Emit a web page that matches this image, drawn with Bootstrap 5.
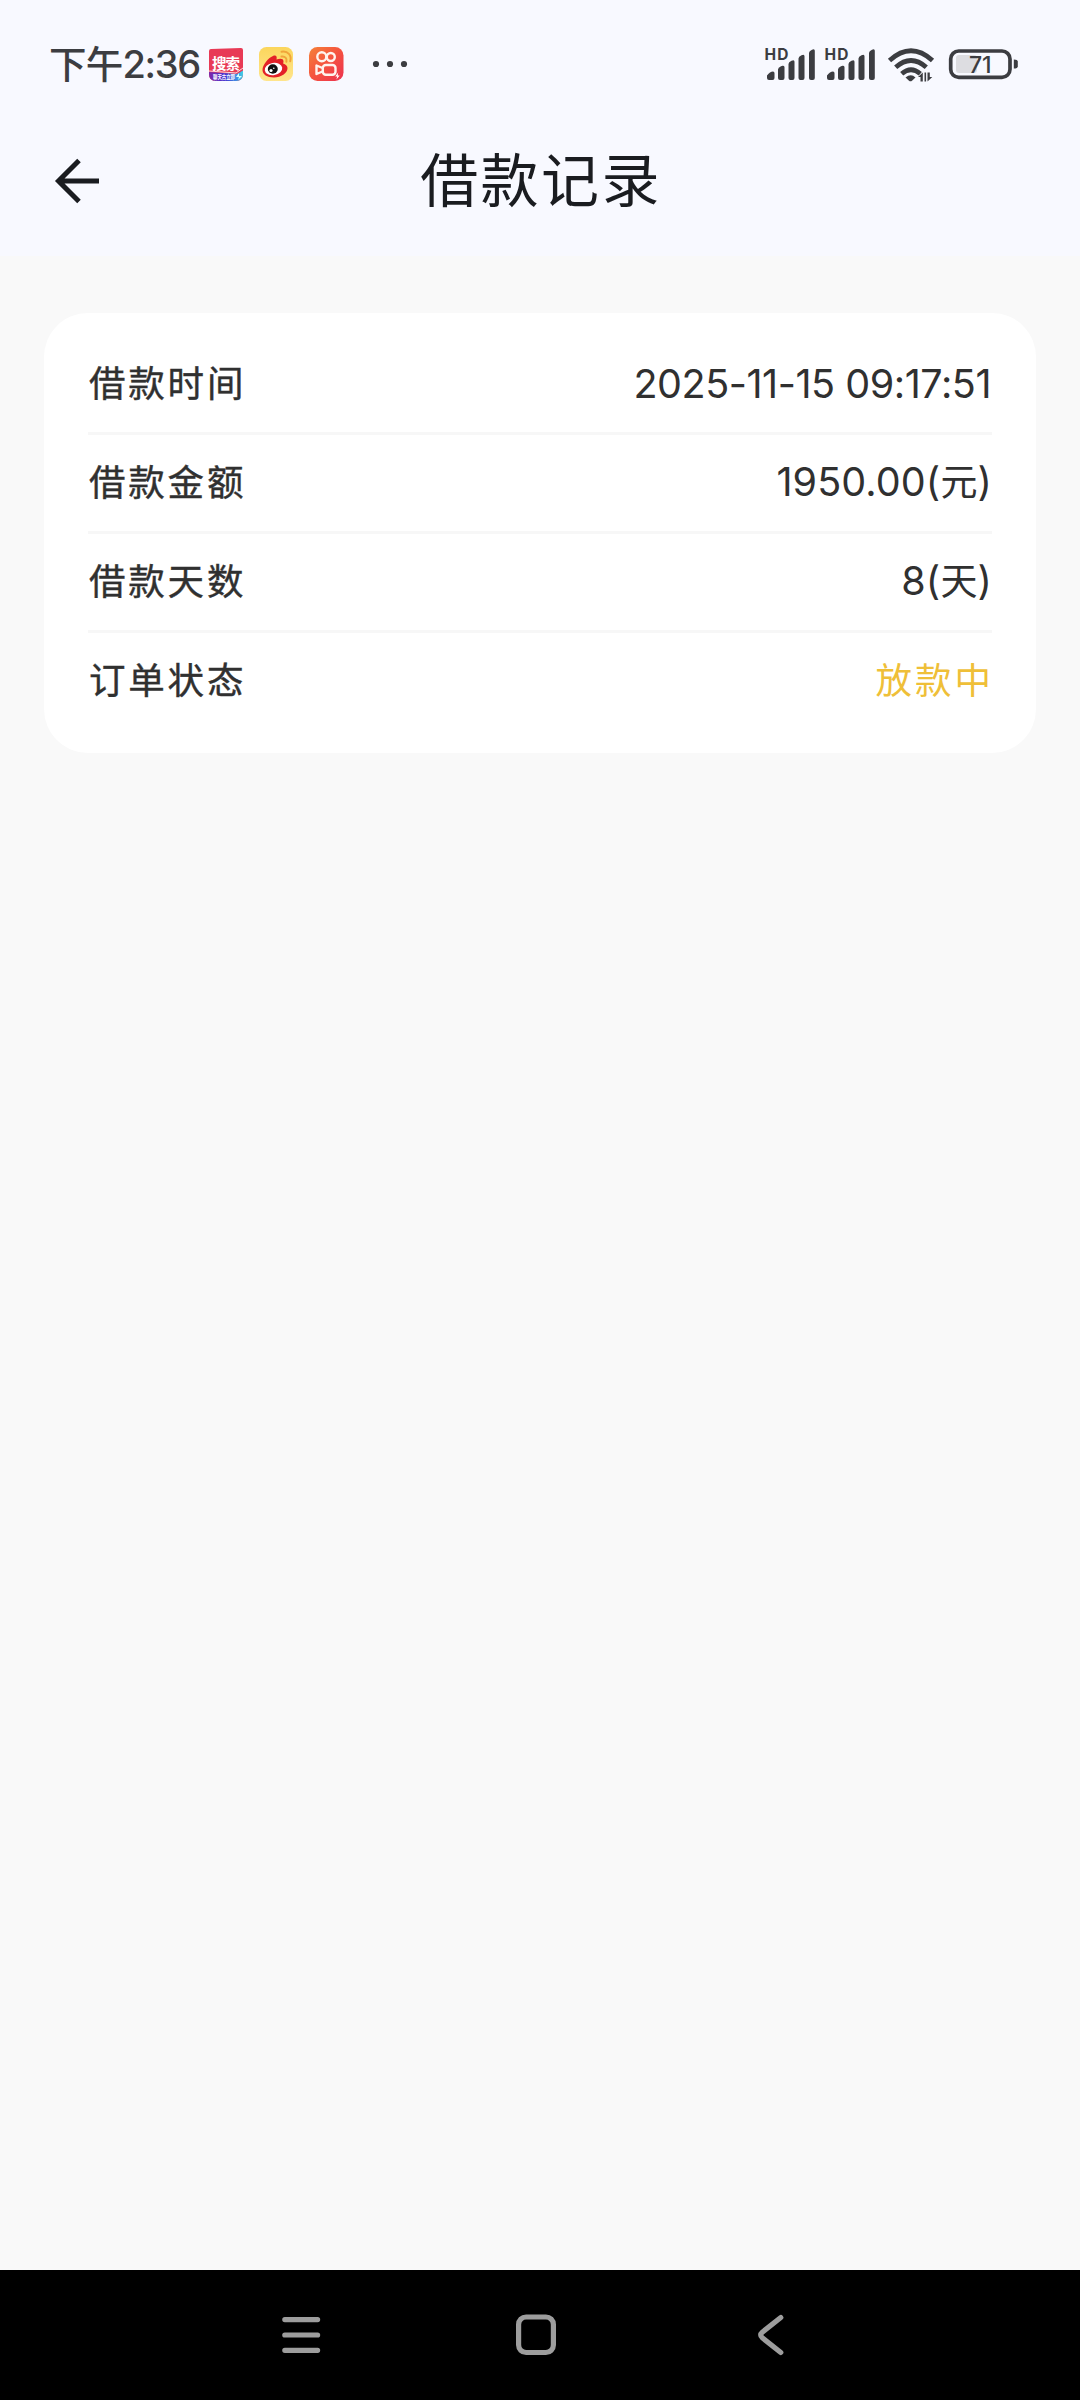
<!DOCTYPE html>
<html lang="zh-CN">
<head>
<meta charset="utf-8">
<meta name="viewport" content="width=device-width, initial-scale=1">
<title>借款记录</title>
<link href="https://cdn.jsdelivr.net/npm/bootstrap@5.3.0/dist/css/bootstrap.min.css" rel="stylesheet">
<style>
  body { background: #f9f9f9; color: #303030; font-family: Inter, "Noto Sans CJK SC", sans-serif; }
  .screen { height: 2400px; width: 1080px; }
  .top-area { background: #f8f9ff; height: 256px; }
  .status-bar { height: 106px; padding: 22px 62px 0 49px; color: #3c3d41; }
  .clock-text { font-size: 38px; line-height: 42px; font-weight: 500; width: 159px; letter-spacing: -1.3px; padding-top: 1px; }
  .clock-text .zh { font-size: 37.5px; letter-spacing: -.8px; }
  .title-bar { height: 150px; display: grid; grid-template-columns: 54px 1fr 54px; padding: 0 50px; color: #1a1c20; }
  .title-bar h1 { font-size: 58px; line-height: 84px; letter-spacing: 2.4px; font-weight: 400; padding: 33px 0 0 2px; }
  .back-btn { padding-top: 47px; line-height: 0; }
  .loan-card { margin: 57px 44px 0; height: 440px; border: 0; border-radius: 44px; padding: 23px 44px 0; background: #fff; }
  .loan-row { height: 99px; border-bottom: 3px solid #f7f7f7; line-height: 60px; background: none; color: inherit; padding: 0 0 1px; }
  .loan-row:last-child { border-color: transparent; }
  .row-label { font-size: 36.5px; letter-spacing: 2.8px; font-weight: 400; -webkit-text-stroke: .4px; padding-left: 1px; }
  .row-value { font-size: 39.5px; letter-spacing: .1px; }
  .row-value.v-time { letter-spacing: -.45px; padding-right: 1px; }
  .row-value .zh { font-size: 37px; }
  .row-status { color: #efbf38; font-size: 36.5px; letter-spacing: 3px; margin-right: -2px; }
  .nav-keys { background: #000; height: 130px; padding-right: 10px; }
</style>
</head>
<body>
<div class="screen d-flex flex-column">
  <header class="top-area">
    <div class="status-bar d-flex align-items-center justify-content-between">
      <div class="d-flex align-items-center">
        <span class="clock-text text-nowrap"><span class="zh">下午</span>2:36</span>
        <svg width="206" height="40" viewBox="208 44 206 40">
          <defs>
            <linearGradient id="kw" x1="0" y1="0" x2="1" y2="1"><stop offset="0" stop-color="#f58239"/><stop offset=".5" stop-color="#f5523f"/><stop offset="1" stop-color="#ec3150"/></linearGradient>
            <linearGradient id="tb" x1="0" x2="1"><stop offset="0" stop-color="#8128a8"/><stop offset=".45" stop-color="#4930cf"/><stop offset=".8" stop-color="#3b93e6"/><stop offset="1" stop-color="#45dbe6"/></linearGradient>
            <linearGradient id="wb" x1="0" y1="0" x2="0" y2="1"><stop offset="0" stop-color="#fbd65c"/><stop offset="1" stop-color="#ffe58d"/></linearGradient>
            <clipPath id="tile"><path d="M209 51q0-2 2-2l30-1q2 0 2 2v24q0 7-7 7h-20q-7 0-7-7z"/></clipPath>
          </defs>
          <g clip-path="url(#tile)">
            <rect x="208" y="46" width="36" height="36" fill="#e83a56"/>
            <path d="M208 72l29 2 7-4v12h-36z" fill="url(#tb)"/>
            <path d="M209 71l27 2 7-5" fill="none" stroke="#ffd9dd" stroke-width="1"/>
          </g>
          <text x="212" y="69" font-size="14.5" font-weight="700" fill="#fff" font-family="Noto Sans CJK SC" textLength="28">搜索</text>
          <text x="213" y="79" font-size="5.500" font-weight="700" fill="#fff" font-family="Noto Sans CJK SC" textLength="22" lengthAdjust="spacingAndGlyphs">聊天古立即</text>
          <path d="M239 73l-3 4h3l-1 3 4-4h-3z" fill="#d9ffff"/>
          <rect x="259" y="47" width="34" height="34" rx="7.500" fill="url(#wb)"/>
          <path d="M262.500 70c0-5 5.500-12 10.500-14 3-1.200 4.300.6 3.500 3.500 3.300-1.400 7-1.300 7 1.800 0 1-.2 1.600-.4 2.200 2.400.8 4.400 2.100 4.400 4.600 0 5.300-6.500 9.400-13.500 9.400s-11.500-3-11.500-7.500z" fill="#e32127"/>
          <ellipse cx="273.500" cy="69" rx="8.800" ry="6.200" fill="#fff" transform="rotate(-9 273.500 69)"/>
          <ellipse cx="272.800" cy="69" rx="5" ry="4.700" fill="#111"/>
          <circle cx="271" cy="70.500" r="1.600" fill="#fff"/><circle cx="273.800" cy="68.200" r=".8" fill="#fff"/>
          <path d="M281.500 56.500c3.500-.6 5.800 1.800 4.900 5.200M281.500 51.800c6.300-1.200 10.500 3.700 8.700 9.500" fill="none" stroke="#f0a53a" stroke-width="2" stroke-linecap="round"/>
          <rect x="309" y="47" width="34.500" height="34" rx="8.500" fill="url(#kw)"/>
          <g fill="none" stroke="#fff3ed" stroke-width="2.400" stroke-linejoin="round">
            <circle cx="321.800" cy="56.800" r="4.500"/><circle cx="330.800" cy="57" r="4"/>
            <rect x="322.800" y="65" width="12.700" height="9.800" rx="3"/><path d="M322.500 68l-6-2.500v8.500l6-2.500"/>
          </g>
          <path d="M338.200 72.500l-3 4h2l-.8 3 3.300-4h-2z" fill="#fff"/>
          <g fill="#3c3d41"><circle cx="376" cy="64" r="3.100"/><circle cx="390" cy="64" r="3.100"/><circle cx="404" cy="64" r="3.100"/></g>
        </svg>
      </div>
      <svg width="254" height="40" viewBox="764 44 254 40" fill="#3c3d41">
        <g id="signal">
          <text x="764.500" y="60" font-size="15.500" font-weight="700" font-family="Inter" textLength="24">HD</text>
          <path d="M767 75.500q3-4 6-4 1.500 0 1.500 1.800V78q0 2-2 2H769q-2 0-2-2zM778 69.500q0-2 3-3.200l1.500-.5q2-.5 2 1.500V78q0 2-2 2H780q-2 0-2-2zM788.500 64q0-2 3-3.200l1-.4q2-.6 2 1.400V78q0 2-2 2h-2q-2 0-2-2zM798.500 58.500q0-2 3-3.200l1-.4q2-.6 2 1.400V78q0 2-2 2h-2q-2 0-2-2zM809 53q0-2 3-3.200l.8-.4q2-.6 2 1.400V78q0 2-2 2H811q-2 0-2-2z"/>
        </g>
        <use href="#signal" x="60"/>
        <g fill="none" stroke="#3c3d41" stroke-width="4.800">
          <path d="M889.500 60.500q21.500-19.500 43 0M895.700 67.300q15.300-13.500 30.600 0M901.700 73.800q9.300-8 18.600 0"/>
        </g>
        <path d="M905.500 77.500q5.500-4.500 10 0l-3.500 3.200q-1.500 1-3 0z"/>
        <path d="M922.800 72.500v9h-2.300v-4.500h-2.500zM924.500 72.500h1.600v9h-1.600zM927.500 72.500h2.300v4.500h2.500l-4.800 4.500z"/>
        <rect x="956" y="55" width="21" height="18" rx="3" fill="#dddde1"/>
        <rect x="950.700" y="51" width="59.300" height="26.300" rx="8" fill="none" stroke="#3c3d41" stroke-width="3.700"/>
        <path d="M1013.800 59.500q4 0 4 2v5q0 2-4 2z"/>
        <text x="969" y="72.500" font-size="23" font-weight="500" font-family="Inter" textLength="22.500">71</text>
      </svg>
    </div>
    <div class="title-bar">
      <div class="back-btn"><svg width="54" height="56" viewBox="50 153 54 56" fill="none" stroke="#1a1c20" stroke-width="5"><path d="M99 181H59M79 160.500L58.500 181 79 201.500"/></svg></div>
      <h1 class="text-center mb-0">借款记录</h1>
    </div>
  </header>
  <main class="flex-grow-1">
    <div class="loan-card card">
      <div class="loan-row d-flex align-items-center justify-content-between"><span class="row-label">借款时间</span><span class="row-value v-time">2025-11-15 09:17:51</span></div>
      <div class="loan-row d-flex align-items-center justify-content-between"><span class="row-label">借款金额</span><span class="row-value">1950.00(<span class="zh">元</span>)</span></div>
      <div class="loan-row d-flex align-items-center justify-content-between"><span class="row-label">借款天数</span><span class="row-value">8(<span class="zh">天</span>)</span></div>
      <div class="loan-row d-flex align-items-center justify-content-between"><span class="row-label">订单状态</span><span class="row-status">放款中</span></div>
    </div>
  </main>
  <footer class="nav-keys d-flex justify-content-center align-items-center">
    <svg width="520" height="60" viewBox="275 2305 520 60" fill="none" stroke="#9d9d9d" stroke-width="5.200" stroke-linecap="round" stroke-linejoin="round">
      <path d="M284.800 2319.600h32.800M284.800 2335h32.800M284.800 2350.300h32.800"/>
      <rect x="518.600" y="2317" width="34.800" height="35.500" rx="7.500"/>
      <path d="M780.800 2317.500l-18.500 14.700q-3.200 2.800 0 5.600l18.500 14.700"/>
    </svg>
  </footer>
</div>
<script src="https://cdn.jsdelivr.net/npm/bootstrap@5.3.0/dist/js/bootstrap.bundle.min.js"></script>
</body>
</html>
